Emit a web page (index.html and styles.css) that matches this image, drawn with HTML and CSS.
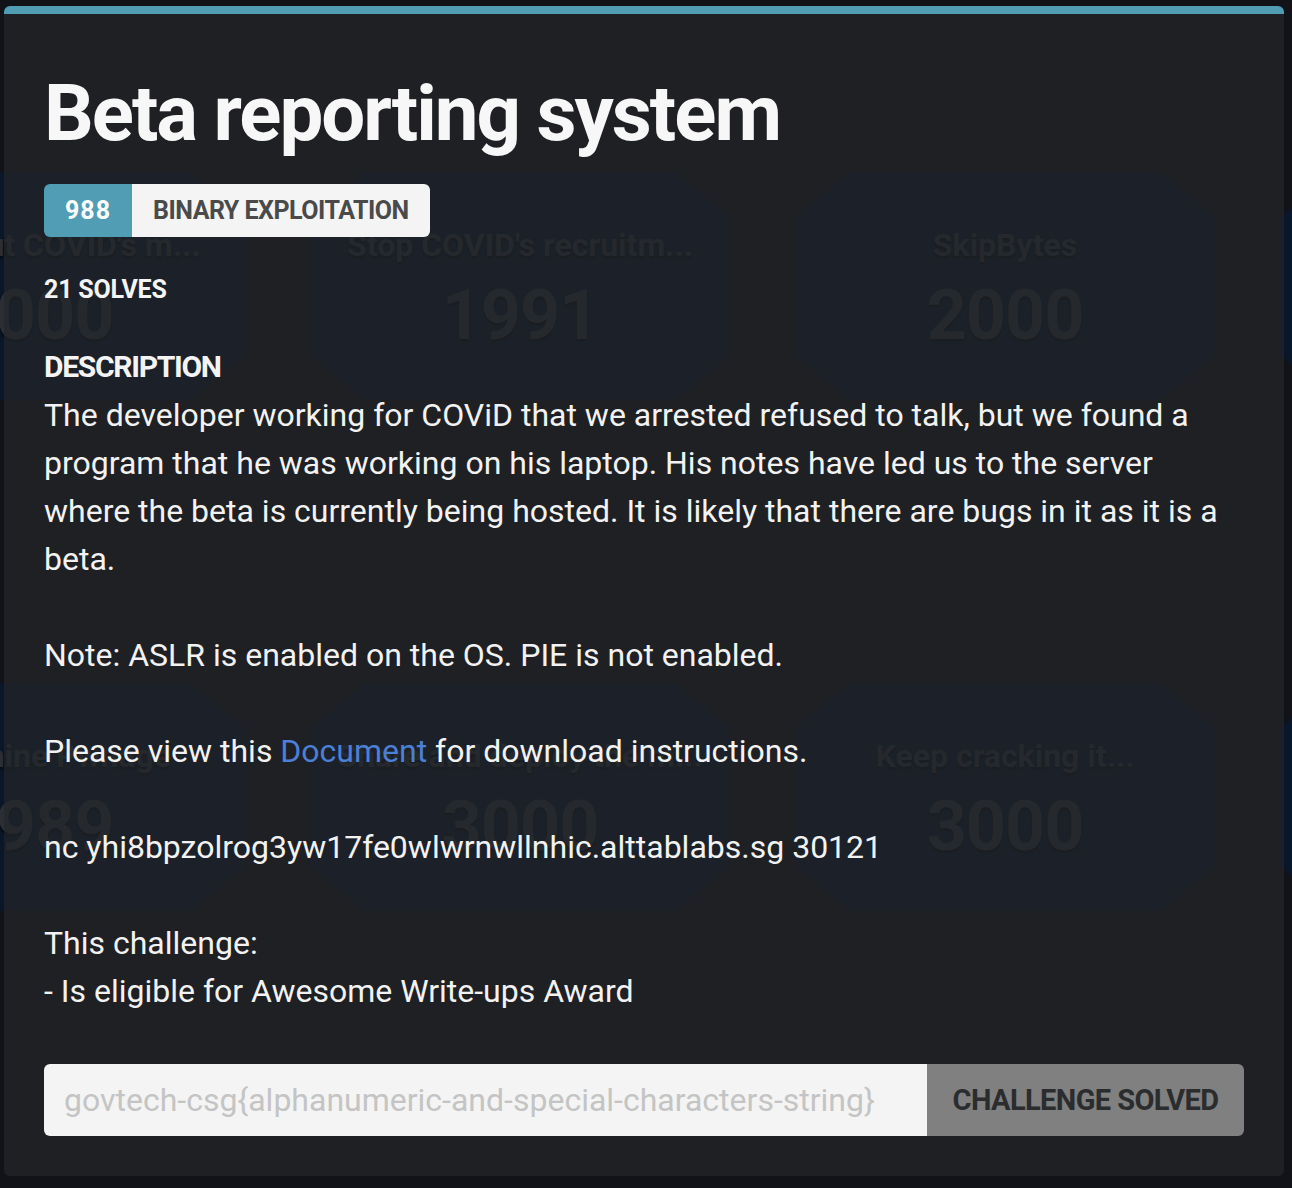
FILE: index.html
```html
<!DOCTYPE html>
<html lang="en">
<head>
<meta charset="utf-8">
<title>Beta reporting system</title>
<link rel="stylesheet" href="styles.css">
</head>
<body>
<div class="board">
  <div class="card"><div class="card-title">Figure out COVID's m...</div><div class="card-pts">2000</div></div>
  <div class="card"><div class="card-title">Stop COVID's recruitm...</div><div class="card-pts">1991</div></div>
  <div class="card"><div class="card-title">SkipBytes</div><div class="card-pts">2000</div></div>
  <div class="card"><div class="card-title">Who are the Dark Lords?</div><div class="card-pts">3000</div></div>
  <div class="card"><div class="card-title">Determine Pwnage</div><div class="card-pts">1989</div></div>
  <div class="card"><div class="card-title">Share and deploy the m...</div><div class="card-pts">3000</div></div>
  <div class="card"><div class="card-title">Keep cracking it...</div><div class="card-pts">3000</div></div>
  <div class="card"><div class="card-title">Hold the line!</div><div class="card-pts">3000</div></div>
</div>

<div class="modal">
  <h1 class="title">Beta reporting system</h1>
  <div class="badge"><span class="badge-pts">988</span><span class="badge-cat">BINARY EXPLOITATION</span></div>
  <div class="solves">21 SOLVES</div>
  <div class="desc-label">DESCRIPTION</div>
  <div class="desc">The developer working for COViD that we arrested refused to talk, but we found a program that he was working on his laptop. His notes have led us to the server where the beta is currently being hosted. It is likely that there are bugs in it as it is a beta.<br><br>Note: ASLR is enabled on the OS. PIE is not enabled.<br><br>Please view this <a class="link" href="#">Document</a> for download instructions.<br><br>nc yhi8bpzolrog3yw17fe0wlwrnwllnhic.alttablabs.sg 30121<br><br>This challenge:<br>- Is eligible for Awesome Write-ups Award</div>
  <form class="flag">
    <input class="flag-input" type="text" placeholder="govtech-csg{alphanumeric-and-special-characters-string}">
    <button class="flag-btn" type="button">CHALLENGE SOLVED</button>
  </form>
</div>
</body>
</html>
```

FILE: styles.css
```css
html, body {
  margin: 0;
  padding: 0;
}
body {
  background: #111318;
  width: 1292px;
  height: 1188px;
  overflow: hidden;
  position: relative;
  font-family: Roboto, "Liberation Sans", sans-serif;
}

/* page behind the modal */
.board {
  display: grid;
  grid-template-columns: repeat(4, 420px);
  grid-auto-rows: 228px;
  column-gap: 65px;
  row-gap: 283px;
  padding-top: 172px;
  margin-left: -175px;
}
.card {
  background: #0a1629;
  clip-path: polygon(55px 0, 365px 0, 420px 45px, 420px 183px, 365px 228px, 55px 228px, 0 183px, 0 45px);
  display: flex;
  flex-direction: column;
  align-items: center;
  color: #2b2e35;
  font-family: Roboto, "Liberation Sans", sans-serif;
  font-weight: bold;
  text-shadow: 0 2px 3px rgba(0, 0, 0, 0.7);
}
.card-title {
  margin-top: 53px;
  font-size: 32px;
  line-height: 40px;
  white-space: nowrap;
  letter-spacing: 0;
}
.card-pts {
  margin-top: 20px;
  font-size: 70px;
  line-height: 60px;
  letter-spacing: -1px;
}

/* modal */
.modal {
  position: absolute;
  top: 6px;
  left: 4px;
  width: 1280px;
  box-sizing: border-box;
  padding: 40px;
  background: rgba(36, 39, 41, 0.7);
  border-top: 8px solid #509db4;
  border-radius: 6px;
}
.title {
  margin: 13px 0 0;
  font-family: Roboto, "Liberation Sans", sans-serif;
  font-weight: bold;
  font-size: 78px;
  line-height: 94px;
  letter-spacing: -2px;
  color: #f7f7f7;
}
.badge {
  margin-top: 23px;
  display: inline-flex;
  height: 53px;
  border-radius: 6px;
  overflow: hidden;
  font-family: Roboto, "Liberation Sans", sans-serif;
  font-weight: bold;
  font-size: 25px;
  letter-spacing: -0.5px;
}
.badge-pts {
  width: 88px;
  background: #509db4;
  color: #ffffff;
  display: flex;
  align-items: center;
  justify-content: center;
  letter-spacing: 1px;
}
.badge-cat {
  background: #f4f4f4;
  color: #4a4a4a;
  display: flex;
  align-items: center;
  padding: 0 21px;
}
.solves {
  margin-top: 33px;
  font-family: Roboto, "Liberation Sans", sans-serif;
  font-weight: bold;
  font-size: 25px;
  line-height: 40px;
  letter-spacing: -0.2px;
  color: #f4f4f4;
}
.desc-label {
  margin-top: 33px;
  font-family: Roboto, "Liberation Sans", sans-serif;
  font-weight: bold;
  font-size: 30px;
  line-height: 48px;
  letter-spacing: -1.3px;
  color: #f4f4f4;
}
.desc {
  font-size: 32px;
  line-height: 48px;
  color: #f2f2f2;
}
.link {
  color: #4c7fd6;
  text-decoration: none;
}
.flag {
  margin: 49px 0 0;
  display: flex;
  height: 72px;
}
.flag-input {
  flex: 1;
  min-width: 0;
  box-sizing: border-box;
  border: none;
  outline: none;
  margin: 0;
  padding: 0 20px;
  background: #f4f4f4;
  border-radius: 6px 0 0 6px;
  font-family: Roboto, "Liberation Sans", sans-serif;
  font-size: 32px;
  color: #333;
}
.flag-input::placeholder {
  color: #c4c4c4;
}
.flag-btn {
  width: 317px;
  border: none;
  margin: 0;
  padding: 0;
  background: #808080;
  border-radius: 0 6px 6px 0;
  color: #2b2c2e;
  font-family: Roboto, "Liberation Sans", sans-serif;
  font-weight: bold;
  font-size: 29px;
  letter-spacing: -0.6px;
}
```
